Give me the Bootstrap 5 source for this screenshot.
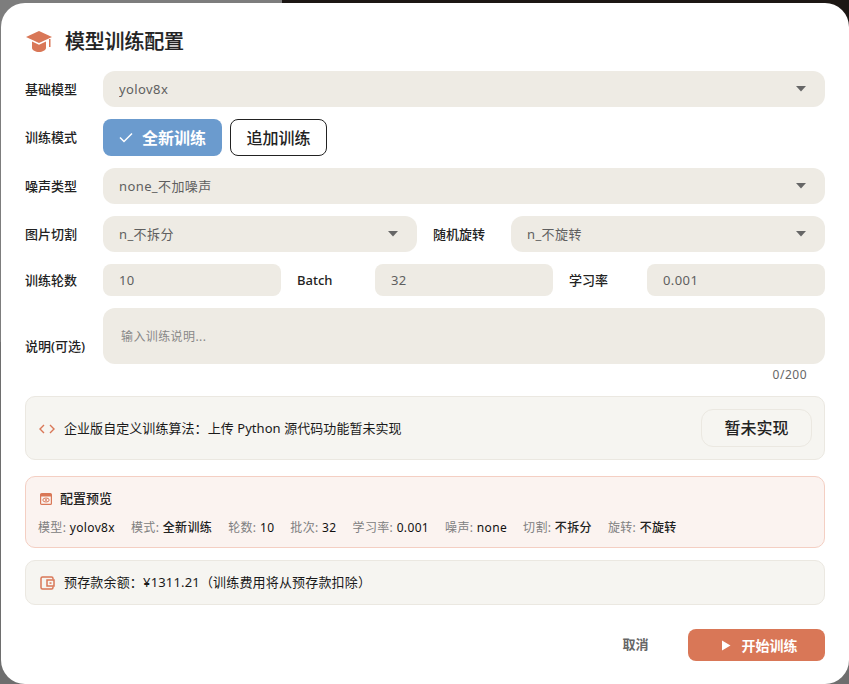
<!DOCTYPE html>
<html lang="zh-CN">
<head>
<meta charset="utf-8">
<title>模型训练配置</title>
<link href="https://cdn.jsdelivr.net/npm/bootstrap@5.3.0/dist/css/bootstrap.min.css" rel="stylesheet">
<style>
html,body{height:100%;margin:0;overflow:hidden}
body{font-family:"Noto Sans","Noto Sans CJK SC",sans-serif;color:#1f1f1f;font-size:13px;text-spacing-trim:space-all;
background:linear-gradient(90deg,#7d7d7d 0,#7d7d7d 282px,#1c1714 282px,#1c1714 100%) top/100% 50% no-repeat,#6e6e6e}
.dlg{position:absolute;left:1px;top:3px;width:848px;height:681px;background:#fff;border-radius:24px;padding:24px 24px 0}
.dlg-title{height:30px;gap:13px;margin-bottom:14px;padding-left:1px}
.dlg-title h1{font-size:20px;font-weight:500;margin:0;color:#222;letter-spacing:-.2px;-webkit-text-stroke:.2px #222}
.frow{display:flex;align-items:center;margin-bottom:12px}
.flabel{flex:0 0 78px;width:78px;font-size:13px;font-weight:500;color:#222;padding-top:1px;margin:0}
.fbody{flex:1 1 0;min-width:0}
.fgap{margin-left:16px}
.form-select.fld,.form-control.fld{height:36px;background-color:#eeebe4;border:0;border-radius:12px;color:#5f5f5f;font-size:13px;padding:1px 16px 0;letter-spacing:.4px;box-shadow:none;font-family:inherit}
.form-select.fld{background-image:url("data:image/svg+xml,%3Csvg xmlns='http://www.w3.org/2000/svg' width='10' height='6'%3E%3Cpath fill='%23666' d='M0 0h10L5 5.500z'/%3E%3C/svg%3E");background-size:10px 6px;background-position:right 19px center}
.form-control.num{height:32px;border-radius:8px;padding-top:0}
.form-control.note{height:56px;padding:20px 18px 0;font-size:12px;resize:none;line-height:17px}
.form-control.note::placeholder{color:#888;opacity:1}
.modebtn{height:37px;border-radius:8px;font-size:16px;font-weight:700;display:inline-flex;align-items:center;padding:0;justify-content:center}
.mode-on{width:119px;background:#6b9bce;border:0;color:#fff;gap:9px}
.mode-off{width:97px;background:#fff;border:1px solid #222;color:#222;font-weight:500;margin-left:8px}
.counter{text-align:right;font-size:12px;color:#666;padding-right:18px;line-height:14px;margin-top:-8px;height:14px;letter-spacing:.5px;margin-bottom:14px}
.panel-x{border-radius:10px;border:1px solid #ebe8e1;background:#f6f5f1}
.p-enter{height:64px;padding:2px 12px 0 13px;margin-bottom:16px;font-size:13px;color:#1a1a1a;letter-spacing:.06px}
.p-enter .gapped{gap:9px}
.p-enter .btn{width:111px;height:38px;margin-top:-2px;border-radius:12px;background:#f6f5f1;border:1px solid #ebe8e1;color:#222;font-size:16px;font-weight:500;padding:0;--bs-btn-hover-bg:#f6f5f1}
.p-prev{height:72px;background:#fbf3f0;border-color:#f4cfc3;padding:13px 12px 0;margin-bottom:12px}
.prev-h{font-size:13px;font-weight:500;gap:8px;height:18px;margin-bottom:11px;color:#222;padding-left:2px}
.prev-list{font-size:12px;gap:16px;color:#808080;line-height:17px;letter-spacing:.35px}
.prev-list b{font-weight:500;color:#222}
.prev-list b.lat{font-weight:400;color:#111}
.p-bal{height:45px;padding:0 14px;gap:9px;font-size:13px;color:#1a1a1a;letter-spacing:.17px}
.dlg-foot{margin-top:24px;gap:38px}
.btn-cancel{background:none;border:0;padding:0 1px 0 0;color:#666;font-size:13px;font-weight:700;width:28px;white-space:nowrap}
.btn-go{width:137px;height:32px;border:0;border-radius:8px;background:#d97757;color:#fff;font-size:14px;font-weight:700;padding:0 0 0 5px;gap:11px}
</style>
</head>
<body>
<div class="dlg">
  <div class="dlg-title d-flex align-items-center">
    <svg width="26" height="22" viewBox="0 0 26 22"><path fill="#d97757" d="M13 0 26 6 13 12 0 6z"/><path fill="#d97757" d="M6 10.500 13 13.800l7-3.300v6.500c0 2-3.500 4-7 4s-7-2-7-4z"/><path fill="#d97757" d="M23 8h1.500v8H23z"/></svg>
    <h1>模型训练配置</h1>
  </div>
  <div class="frow">
    <label class="flabel">基础模型</label>
    <div class="fbody"><select class="form-select fld"><option>yolov8x</option></select></div>
  </div>
  <div class="frow">
    <label class="flabel">训练模式</label>
    <div class="fbody d-flex">
      <button class="btn modebtn mode-on"><svg width="14" height="11" viewBox="0 0 14 11"><path fill="none" stroke="#fff" stroke-width="1.500" d="M1 5.500 5 9.500 13 1.500"/></svg>全新训练</button>
      <button class="btn modebtn mode-off">追加训练</button>
    </div>
  </div>
  <div class="frow">
    <label class="flabel">噪声类型</label>
    <div class="fbody"><select class="form-select fld"><option>none_不加噪声</option></select></div>
  </div>
  <div class="frow">
    <label class="flabel">图片切割</label>
    <div class="fbody"><select class="form-select fld"><option>n_不拆分</option></select></div>
    <label class="flabel fgap">随机旋转</label>
    <div class="fbody"><select class="form-select fld"><option>n_不旋转</option></select></div>
  </div>
  <div class="frow">
    <label class="flabel">训练轮数</label>
    <div class="fbody"><input class="form-control fld num" value="10"></div>
    <label class="flabel fgap">Batch</label>
    <div class="fbody"><input class="form-control fld num" value="32"></div>
    <label class="flabel fgap">学习率</label>
    <div class="fbody"><input class="form-control fld num" value="0.001"></div>
  </div>
  <div class="frow align-items-end">
    <label class="flabel pb-2">说明(可选)</label>
    <div class="fbody"><textarea class="form-control fld note" placeholder="输入训练说明..."></textarea></div>
  </div>
  <div class="counter">0/200</div>
  <div class="panel-x p-enter d-flex align-items-center justify-content-between">
    <div class="d-flex align-items-center gapped">
      <svg width="16" height="10" viewBox="0 0 16 10"><path fill="none" stroke="#d97757" stroke-width="1.400" d="M5 1 1 5l4 4M11 1l4 4-4 4"/></svg>
      <span>企业版自定义训练算法：上传 Python 源代码功能暂未实现</span>
    </div>
    <button class="btn">暂未实现</button>
  </div>
  <div class="panel-x p-prev">
    <div class="prev-h d-flex align-items-center">
      <svg width="12" height="12" viewBox="0 0 12 12"><rect x=".6" y=".6" width="10.800" height="10.800" rx="1" fill="#fbf3f0" stroke="#d97757" stroke-width="1.200"/><path fill="#d97757" d="M1 1h10v2.500H1z"/><ellipse cx="6" cy="7" rx="3.200" ry="2" fill="none" stroke="#d97757"/><circle cx="6" cy="7" r=".9" fill="#d97757"/></svg>
      <span>配置预览</span>
    </div>
    <div class="prev-list d-flex">
      <span>模型: <b class="lat">yolov8x</b></span><span>模式: <b>全新训练</b></span><span>轮数: <b class="lat">10</b></span><span>批次: <b class="lat">32</b></span><span>学习率: <b class="lat">0.001</b></span><span>噪声: <b class="lat">none</b></span><span>切割: <b>不拆分</b></span><span>旋转: <b>不旋转</b></span>
    </div>
  </div>
  <div class="panel-x p-bal d-flex align-items-center">
    <svg width="15" height="14" viewBox="0 0 15 14"><path fill="none" stroke="#d97757" stroke-width="1.500" d="M13 3.500V2.500a1.500 1.500 0 0 0-1.500-1.500H2.500A1.500 1.500 0 0 0 1 2.500v9A1.500 1.500 0 0 0 2.500 13h9a1.500 1.500 0 0 0 1.500-1.500v-1"/><rect x="7" y="4" width="7" height="6" fill="none" stroke="#d97757" stroke-width="1.500"/><rect x="9.500" y="6.300" width="2" height="1.500" fill="#d97757"/></svg>
    <span>预存款余额：¥1311.21（训练费用将从预存款扣除）</span>
  </div>
  <div class="dlg-foot d-flex justify-content-end align-items-center">
    <button class="btn btn-cancel">取消</button>
    <button class="btn btn-go d-inline-flex align-items-center justify-content-center"><svg width="10" height="11" viewBox="0 0 10 11"><path fill="#fff" d="M1 .5v10l8.500-5z"/></svg>开始训练</button>
  </div>
</div>
<script src="https://cdn.jsdelivr.net/npm/bootstrap@5.3.0/dist/js/bootstrap.bundle.min.js"></script>
</body>
</html>
